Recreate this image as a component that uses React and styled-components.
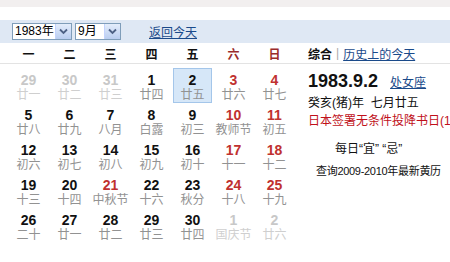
import React from 'react'
import styled, { createGlobalStyle } from 'styled-components'

const Global = createGlobalStyle`
  html, body {
    margin: 0;
    padding: 0;
    background: #fff;
  }
  body {
    font-family: "Liberation Sans", Arial, "Noto Sans CJK SC", sans-serif;
    font-size: 12px;
    color: #000;
  }
`

const Page = styled.div`
  width: 450px;
  height: 262px;
  overflow: hidden;
  background: #fff;
`

const TopStrip = styled.div`
  height: 7px;
  background: #f2efef;
  margin-bottom: 13px;
`

const Toolbar = styled.div`
  display: flex;
  align-items: center;
  height: 23px;
  padding-left: 12px;
  background: #dfe8f4;
`

const Select = styled.div`
  display: flex;
  align-items: stretch;
  width: ${p => p.$w}px;
  height: 17px;
  margin-right: 3px;
  border: 1px solid #7f9db9;
  background: #fff;
  box-sizing: border-box;
`

const SelectText = styled.span`
  flex: 1;
  padding-left: 2px;
  font-size: 12px;
  line-height: 15px;
  color: #000;
`

const SelectBtn = styled.span`
  width: 15px;
  display: flex;
  align-items: center;
  justify-content: center;
  background: linear-gradient(#e4edfb, #b9cdf0);
  border-left: 1px solid #c3d3fd;
`

const BackLink = styled.a`
  margin-left: 25px;
  color: #1a4a8a;
  text-decoration: underline;
  font-size: 12px;
`

const HeaderRow = styled.div`
  display: flex;
  height: 20px;
  align-items: center;
  border-bottom: 1px solid #e3e3e3;
`

const WeekGrid = styled.div`
  display: grid;
  grid-template-columns: repeat(7, 41px);
  margin-left: 8px;
  width: 300px;
`

const WeekDay = styled.div`
  text-align: center;
  font-family: "Noto Sans CJK SC", sans-serif;
  font-weight: bold;
  font-size: 12px;
  color: ${p => (p.$weekend ? '#9a2b2b' : '#111')};
`

const Tabs = styled.div`
  display: flex;
  align-items: center;
  gap: 4px;
  font-size: 12px;
`

const TabActive = styled.span`
  font-weight: bold;
  color: #111;
`

const Sep = styled.span`
  color: #aaa;
`

const Link = styled.a`
  color: #1a4a8a;
  text-decoration: underline;
  font-size: 12px;
`

const Body = styled.div`
  display: flex;
`

const DayGrid = styled.div`
  display: grid;
  grid-template-columns: repeat(7, 41px);
  grid-auto-rows: 35px;
  margin: 4px 0 0 8px;
  width: 300px;
  flex-shrink: 0;
`

const Cell = styled.div`
  display: flex;
  flex-direction: column;
  align-items: center;
  padding-top: 4px;
  box-sizing: border-box;
  margin: 0 1px;
  background: ${p => (p.$sel ? '#d6e7f8' : 'transparent')};
  border: 1px solid ${p => (p.$sel ? '#a4c6ea' : 'transparent')};
`

const Num = styled.div`
  font-weight: bold;
  font-size: 14px;
  line-height: 15px;
  color: ${p => (p.$faded ? '#c8c8c8' : p.$red ? '#c0312f' : '#111')};
`

const Lunar = styled.div`
  font-size: 12px;
  line-height: 14px;
  color: ${p => (p.$faded ? '#cfcfcf' : '#929292')};
  white-space: nowrap;
`

const Side = styled.div`
  display: flex;
  flex-direction: column;
  padding-top: 4px;
  white-space: nowrap;
  overflow: hidden;
`

const DateLine = styled.div`
  display: flex;
  align-items: baseline;
  gap: 12px;
`

const BigDate = styled.span`
  font-size: 18px;
  font-weight: bold;
  color: #111;
  line-height: 26px;
`

const InfoLine = styled.div`
  font-size: 12px;
  line-height: 18px;
  color: ${p => p.$color || '#111'};
`

const Center = styled.div`
  font-size: ${p => p.$fs || 12}px;
  letter-spacing: ${p => p.$ls || 0}px;
  line-height: 16px;
  color: #111;
  margin-top: ${p => p.$mt}px;
  padding-left: ${p => p.$pl}px;
`

const Chevron = () => (
  <svg width="9" height="7" viewBox="0 0 9 7">
    <path d="M1 1.5 L4.5 5 L8 1.5" fill="none" stroke="#4d6185" strokeWidth="1.8" />
  </svg>
)

const weeks = [
  [['29', '廿一', 'f'], ['30', '廿二', 'f'], ['31', '廿三', 'f'], ['1', '廿四'], ['2', '廿五', 's'], ['3', '廿六', 'r'], ['4', '廿七', 'r']],
  [['5', '廿八'], ['6', '廿九'], ['7', '八月'], ['8', '白露'], ['9', '初三'], ['10', '教师节', 'r'], ['11', '初五', 'r']],
  [['12', '初六'], ['13', '初七'], ['14', '初八'], ['15', '初九'], ['16', '初十'], ['17', '十一', 'r'], ['18', '十二', 'r']],
  [['19', '十三'], ['20', '十四'], ['21', '中秋节', 'r'], ['22', '十六'], ['23', '秋分'], ['24', '十八', 'r'], ['25', '十九', 'r']],
  [['26', '二十'], ['27', '廿一'], ['28', '廿二'], ['29', '廿三'], ['30', '廿四'], ['1', '国庆节', 'f'], ['2', '廿六', 'f']],
]

const weekNames = ['一', '二', '三', '四', '五', '六', '日']

export default function App() {
  return (
    <Page>
      <Global />
      <TopStrip />
      <Toolbar>
        <Select $w={60}>
          <SelectText>1983年</SelectText>
          <SelectBtn><Chevron /></SelectBtn>
        </Select>
        <Select $w={46}>
          <SelectText>9月</SelectText>
          <SelectBtn><Chevron /></SelectBtn>
        </Select>
        <BackLink>返回今天</BackLink>
      </Toolbar>
      <HeaderRow>
        <WeekGrid>
          {weekNames.map((w, i) => (
            <WeekDay key={w} $weekend={i > 4}>{w}</WeekDay>
          ))}
        </WeekGrid>
        <Tabs>
          <TabActive>综合</TabActive>
          <Sep>|</Sep>
          <Link>历史上的今天</Link>
        </Tabs>
      </HeaderRow>
      <Body>
        <DayGrid>
          {weeks.flat().map(([n, l, f], i) => (
            <Cell key={i} $sel={f === 's'}>
              <Num $faded={f === 'f'} $red={f === 'r'}>{n}</Num>
              <Lunar $faded={f === 'f'}>{l}</Lunar>
            </Cell>
          ))}
        </DayGrid>
        <Side>
          <DateLine>
            <BigDate>1983.9.2</BigDate>
            <Link>处女座</Link>
          </DateLine>
          <InfoLine>癸亥(猪)年&nbsp;&nbsp;七月廿五</InfoLine>
          <InfoLine $color="#c0101a">日本签署无条件投降书日(1945)</InfoLine>
          <Center $mt={11} $pl={27}>每日“宜” “忌”</Center>
          <Center $mt={6} $pl={8} $fs={11} $ls={-0.3}>查询2009-2010年最新黄历</Center>
        </Side>
      </Body>
    </Page>
  )
}
